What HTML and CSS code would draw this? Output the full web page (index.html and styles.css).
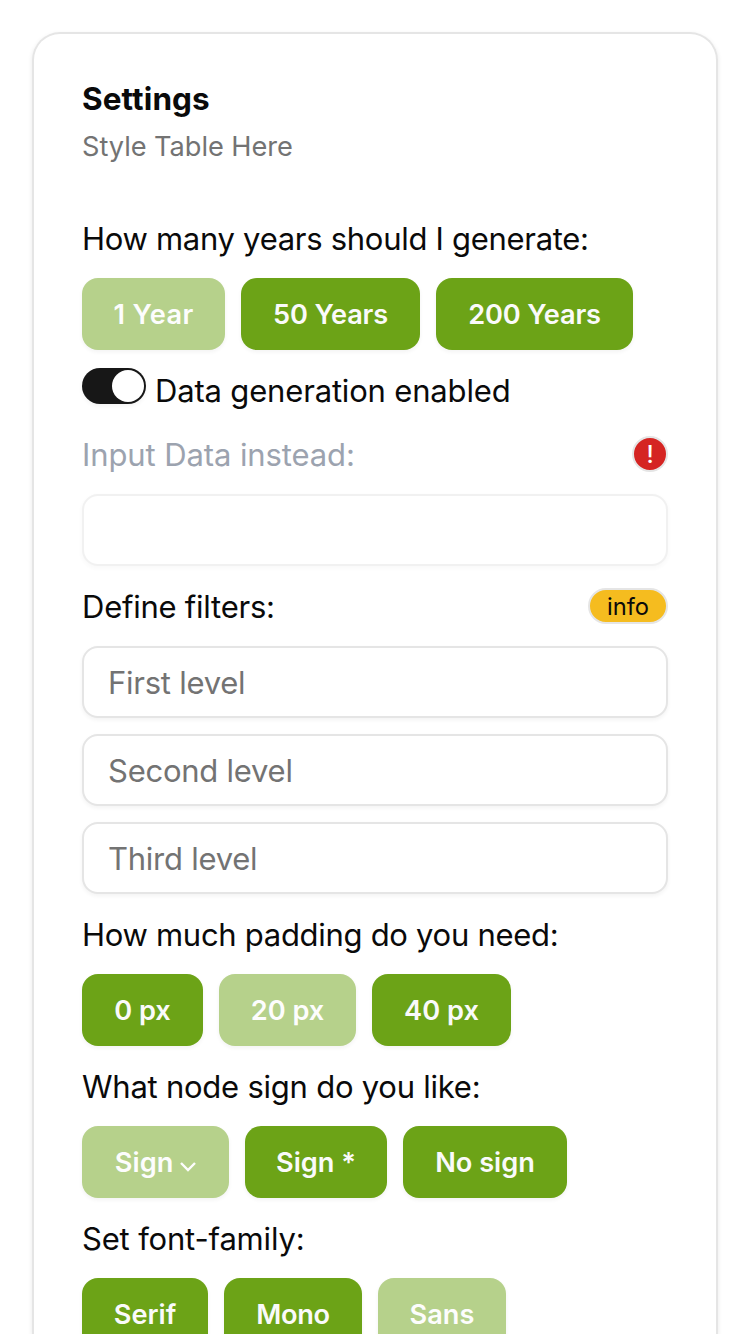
FILE: index.html
```html
<!DOCTYPE html>
<html lang="en">
<head>
<meta charset="utf-8">
<title>Settings</title>
<link rel="stylesheet" href="styles.css">
</head>
<body>
<main class="card">
  <header>
    <h1 class="title">Settings</h1>
    <p class="subtitle">Style Table Here</p>
  </header>
  <form class="form">
    <p class="label years">How many years should I generate:</p>
    <div class="buttons">
      <button type="button" class="btn off w143 loose">1 Year</button>
      <button type="button" class="btn w179 snug">50 Years</button>
      <button type="button" class="btn w197 snug">200 Years</button>
    </div>
    <div class="toggle"><span class="switch"></span><span class="label enabled">Data generation enabled</span></div>
    <div class="row"><p class="label muted">Input Data instead:</p><span class="badge alert">!</span></div>
    <input class="field faint" disabled>
    <div class="row"><p class="label">Define filters:</p><span class="badge info">info</span></div>
    <input class="field" placeholder="First level">
    <input class="field" placeholder="Second level">
    <input class="field" placeholder="Third level">
    <p class="label years">How much padding do you need:</p>
    <div class="buttons">
      <button type="button" class="btn w121">0 px</button>
      <button type="button" class="btn off w137">20 px</button>
      <button type="button" class="btn w139">40 px</button>
    </div>
    <p class="label">What node sign do you like:</p>
    <div class="buttons">
      <button type="button" class="btn off w147">Sign <svg class="chevron" viewBox="0 0 16 10"><path d="M1 1L8 8L15 1"/></svg></button>
      <button type="button" class="btn w142">Sign *</button>
      <button type="button" class="btn w164">No sign</button>
    </div>
    <p class="label family">Set font-family:</p>
    <div class="buttons">
      <button type="button" class="btn w126">Serif</button>
      <button type="button" class="btn w138 tight">Mono</button>
      <button type="button" class="btn off w128">Sans</button>
    </div>
  </form>
</main>
</body>
</html>
```
FILE: styles.css
```css
* { box-sizing: border-box; }
html { height: 1334px; overflow: hidden; }
body { margin: 0; padding: 32px 32px 0; height: 1334px; overflow: hidden; background: #fff; color: #0a0a0a; font-family: Inter, "Liberation Sans", sans-serif; }
.card { height: 1302px; overflow: hidden; border: 2px solid #e5e5e5; border-bottom: 0; border-radius: 28px 28px 0 0; padding: 48px 48px 0; box-shadow: 0 2px 5px rgba(0,0,0,.09); }
h1, p { margin: 0; white-space: nowrap; }
.title { padding-top: 1px; font-size: 31.5px; line-height: 32px; font-weight: 650; letter-spacing: .1px; }
.subtitle { margin-top: 12px; font-size: 27.2px; line-height: 40px; color: #737373; letter-spacing: -.05px; }
.form { display: grid; gap: 16px; margin-top: 47px; }
.label { height: 48px; font-size: 31px; line-height: 50px; letter-spacing: -.24px; }
.years { letter-spacing: -.29px; }
.family { letter-spacing: -.17px; }
.enabled { letter-spacing: -.17px; }
.buttons { display: flex; gap: 16px; }
.btn { height: 72px; border: 0; border-radius: 16px; padding: 2px 0 0; background: #6ca317; color: #fafafa; font: 600 27.2px/40px Inter, sans-serif; white-space: nowrap; box-shadow: 0 2px 4px rgba(0,0,0,.05); }
.off { background: #b6d18b; color: #fdfdfd; }
.loose { letter-spacing: .4px; }
.snug { letter-spacing: -.15px; }
.tight { letter-spacing: -.3px; }
.w143 { width: 143px; } .w179 { width: 179px; } .w197 { width: 197px; }
.w121 { width: 121px; } .w137 { width: 137px; } .w139 { width: 139px; }
.w147 { width: 147px; } .w142 { width: 142px; } .w164 { width: 164px; }
.w126 { width: 126px; } .w138 { width: 138px; } .w128 { width: 128px; }
.row { display: flex; justify-content: space-between; align-items: center; height: 48px; }
.toggle { display: flex; gap: 9px; height: 48px; }
.switch { width: 64px; height: 36px; margin-top: 2px; border-radius: 18px; background: #171717; padding: 2px; box-shadow: 0 2px 4px rgba(0,0,0,.05); }
.switch::after { content: ""; display: block; width: 32px; height: 32px; margin-left: 28px; border-radius: 50%; background: #fff; }
.field { display: block; width: 100%; height: 72px; padding: 0 24px; background: #fff; border: 2px solid #e5e5e5; border-radius: 16px; font: 31px Inter, sans-serif; letter-spacing: -.25px; box-shadow: 0 2px 4px rgba(0,0,0,.05); }
.field::placeholder { color: #737373; opacity: 1; }
.muted { color: #9ca3af; letter-spacing: -.1px; }
.faint { opacity: .5; }
.badge { display: flex; justify-content: center; align-items: center; height: 36px; border: 2px solid #e5e5e5; border-radius: 18px; font-size: 23.7px; }
.alert { width: 36px; background: #d52422; color: #fff; font-weight: 500; }
.info { width: 80px; background: #f5bc1f; }
.chevron { width: 16px; height: 10px; fill: none; stroke: currentColor; stroke-width: 2.4; }
```
